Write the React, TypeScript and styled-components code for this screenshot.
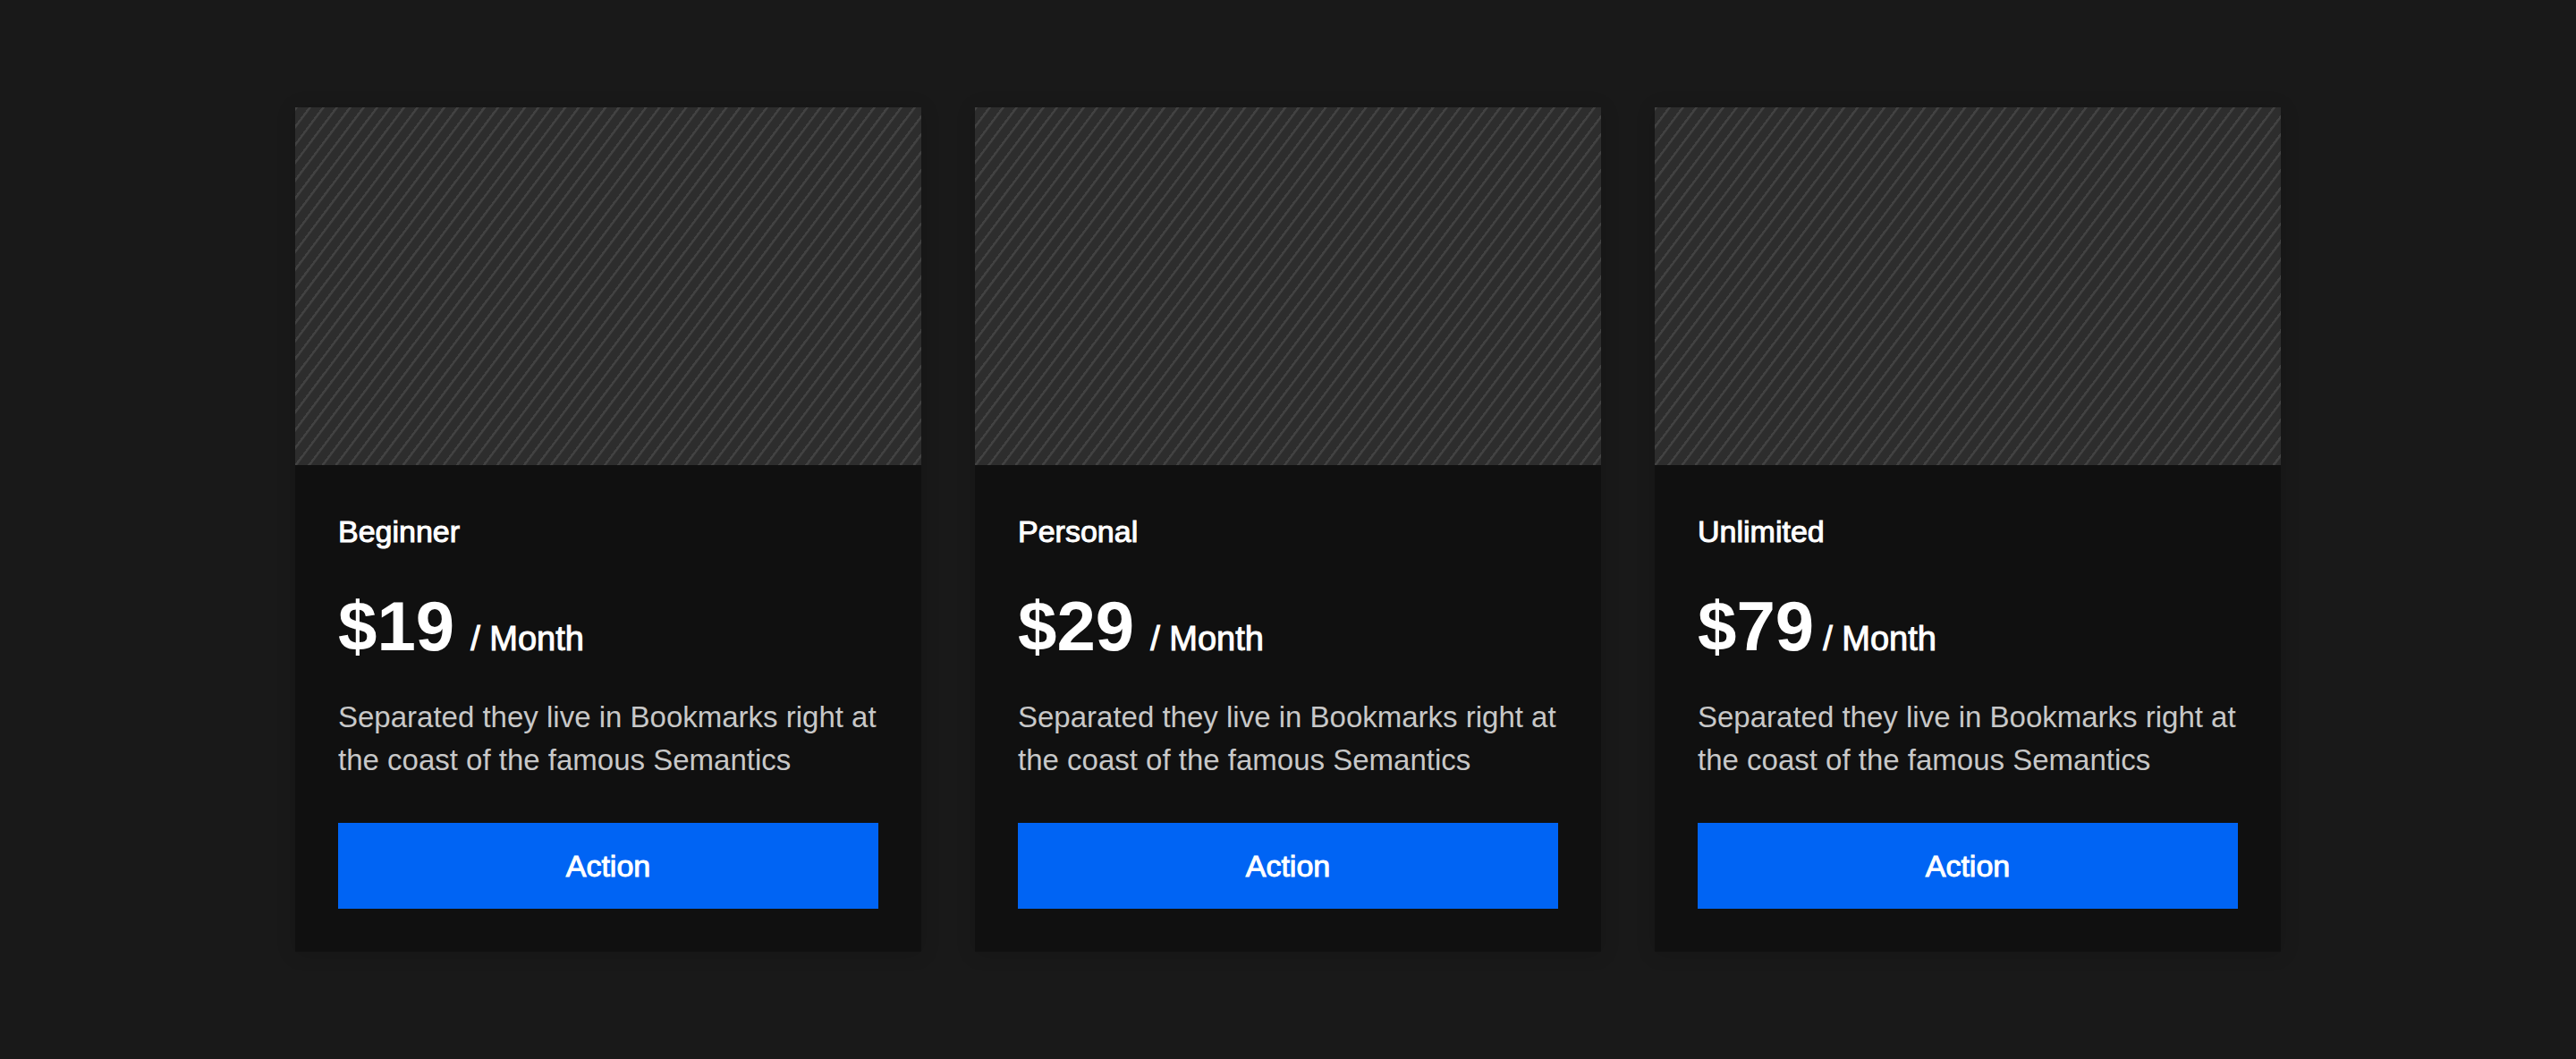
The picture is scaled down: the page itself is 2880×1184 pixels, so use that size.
import React from "react";
import styled, { createGlobalStyle } from "styled-components";

const GlobalStyle = createGlobalStyle`
  *, *::before, *::after { box-sizing: border-box; }
  body {
    margin: 0;
    background: #191919;
    color: #ffffff;
    font-family: "Liberation Sans", Arial, sans-serif;
    -webkit-font-smoothing: antialiased;
  }
`;

const Page = styled.main`
  min-height: 100vh;
  padding: 120px 48px;
`;

const Plans = styled.section`
  display: grid;
  grid-template-columns: repeat(auto-fit, minmax(560px, 1fr));
  gap: 60px;
  max-width: 2220px;
  margin: 0 auto;
`;

const Card = styled.article`
  display: flex;
  flex-direction: column;
  background: #101010;
  box-shadow: 0 2px 20px rgba(0, 0, 0, 0.15);
`;

const Cover = styled.div`
  height: 400px;
  background: repeating-linear-gradient(
    127deg,
    #424242 0px,
    #424242 2px,
    #2d2d2d 3px,
    #2d2d2d 12px
  );
`;

const Body = styled.div`
  display: flex;
  flex-direction: column;
  padding: 48px;
`;

const Name = styled.h2`
  margin: 0 0 32px;
  font-size: 34px;
  line-height: 52px;
  font-weight: 500;
  -webkit-text-stroke: 1px currentColor;
`;

const Price = styled.p<{ $gap: number }>`
  display: flex;
  align-items: flex-end;
  gap: ${({ $gap }) => $gap}px;
  margin: 0 0 30px;
`;

const Amount = styled.strong`
  font-size: 78px;
  line-height: 96px;
  font-weight: 700;
`;

const Period = styled.span`
  font-size: 38px;
  line-height: 68px;
  font-weight: 500;
  -webkit-text-stroke: 1px currentColor;
`;

const Description = styled.p`
  margin: 0 0 46px;
  color: #c8c8c8;
  font-size: 33px;
  line-height: 48px;
`;

const ActionButton = styled.button`
  height: 96px;
  border: 0;
  background: #0064f4;
  color: #ffffff;
  font-family: inherit;
  font-size: 34px;
  font-weight: 500;
  -webkit-text-stroke: 1px currentColor;
  cursor: pointer;
`;

const plans = [
  { name: "Beginner", price: "$19", gap: 18 },
  { name: "Personal", price: "$29", gap: 18 },
  { name: "Unlimited", price: "$79", gap: 10 },
];

export default function App() {
  return (
    <>
      <GlobalStyle />
      <Page>
        <Plans>
          {plans.map((plan) => (
            <Card key={plan.name}>
              <Cover />
              <Body>
                <Name>{plan.name}</Name>
                <Price $gap={plan.gap}>
                  <Amount>{plan.price}</Amount>
                  <Period>/ Month</Period>
                </Price>
                <Description>
                  Separated they live in Bookmarks right at the coast of the
                  famous Semantics
                </Description>
                <ActionButton type="button">Action</ActionButton>
              </Body>
            </Card>
          ))}
        </Plans>
      </Page>
    </>
  );
}
